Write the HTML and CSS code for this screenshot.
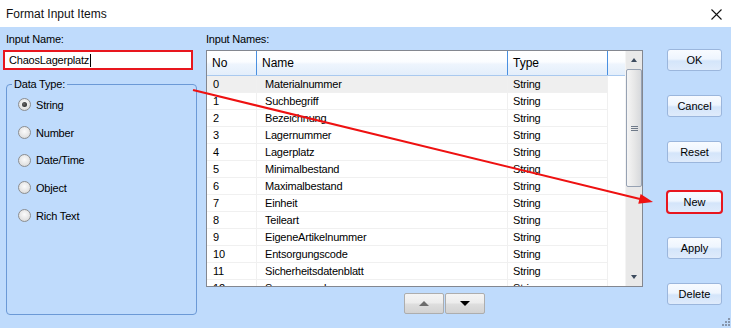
FILE: index.html
```html
<!DOCTYPE html>
<html>
<head>
    <title>Format Input Items</title>
    <link rel="stylesheet" href="styles.css">
</head>
<body>
    <div class="window">
        <div class="titlebar">
            <span class="title">Format Input Items</span>
            <svg class="close" width="11" height="11" viewBox="0 0 11 11">
                <path d="M0.5 0.5 L10.5 10.5 M10.5 0.5 L0.5 10.5" stroke="#111" stroke-width="1.1"/>
            </svg>
        </div>

        <div class="client">
            <div class="left-pane">
                <label class="field-label">Input Name:</label>
                <div class="name-field"><span>ChaosLagerplatz</span><span class="caret"></span></div>

                <fieldset class="group">
                    <legend>Data Type:</legend>
                    <div class="radio checked"><span class="radio-mark"></span>String</div>
                    <div class="radio"><span class="radio-mark"></span>Number</div>
                    <div class="radio"><span class="radio-mark"></span>Date/Time</div>
                    <div class="radio"><span class="radio-mark"></span>Object</div>
                    <div class="radio"><span class="radio-mark"></span>Rich Text</div>
                </fieldset>
            </div>

            <div class="center-pane">
                <label class="field-label">Input Names:</label>
                <div class="list">
                    <div class="list-view">
                        <div class="list-head">
                            <div class="hcell col-no">No</div>
                            <div class="hcell col-name">Name</div>
                            <div class="hcell col-type">Type</div>
                        </div>
                        <div class="row selected"><div class="cell col-no">0</div><div class="cell col-name">Materialnummer</div><div class="cell col-type">String</div></div>
                        <div class="row"><div class="cell col-no">1</div><div class="cell col-name">Suchbegriff</div><div class="cell col-type">String</div></div>
                        <div class="row"><div class="cell col-no">2</div><div class="cell col-name">Bezeichnung</div><div class="cell col-type">String</div></div>
                        <div class="row"><div class="cell col-no">3</div><div class="cell col-name">Lagernummer</div><div class="cell col-type">String</div></div>
                        <div class="row"><div class="cell col-no">4</div><div class="cell col-name">Lagerplatz</div><div class="cell col-type">String</div></div>
                        <div class="row"><div class="cell col-no">5</div><div class="cell col-name">Minimalbestand</div><div class="cell col-type">String</div></div>
                        <div class="row"><div class="cell col-no">6</div><div class="cell col-name">Maximalbestand</div><div class="cell col-type">String</div></div>
                        <div class="row"><div class="cell col-no">7</div><div class="cell col-name">Einheit</div><div class="cell col-type">String</div></div>
                        <div class="row"><div class="cell col-no">8</div><div class="cell col-name">Teileart</div><div class="cell col-type">String</div></div>
                        <div class="row"><div class="cell col-no">9</div><div class="cell col-name">EigeneArtikelnummer</div><div class="cell col-type">String</div></div>
                        <div class="row"><div class="cell col-no">10</div><div class="cell col-name">Entsorgungscode</div><div class="cell col-type">String</div></div>
                        <div class="row"><div class="cell col-no">11</div><div class="cell col-name">Sicherheitsdatenblatt</div><div class="cell col-type">String</div></div>
                        <div class="row"><div class="cell col-no">12</div><div class="cell col-name">Sperrvermerk</div><div class="cell col-type">String</div></div>
                    </div>
                    <div class="scrollbar">
                        <div class="sb-btn"><span class="tri-up"></span></div>
                        <div class="sb-thumb"><span class="grip-lines"></span></div>
                        <div class="sb-track"></div>
                        <div class="sb-btn"><span class="tri-down"></span></div>
                    </div>
                </div>
                <div class="move-bar">
                    <button class="move-btn"><span class="move-up"></span></button>
                    <button class="move-btn"><span class="move-down"></span></button>
                </div>
            </div>

            <div class="button-col">
                <button class="btn">OK</button>
                <button class="btn">Cancel</button>
                <button class="btn">Reset</button>
                <button class="btn btn-new">New</button>
                <button class="btn">Apply</button>
                <button class="btn">Delete</button>
            </div>
        </div>

        <!-- annotation arrow drawn over the dialog -->
        <svg class="annotation" width="731" height="328" viewBox="0 0 731 328">
            <line x1="193" y1="90" x2="640" y2="199" stroke="#ee1111" stroke-width="2"/>
            <polygon points="653,202 638.3,203.8 640.6,194" fill="#ee1111"/>
        </svg>

        <svg class="size-grip" width="12" height="12" viewBox="0 0 12 12">
            <rect x="9" y="2" width="2" height="2" fill="#8796ac"/>
            <rect x="6" y="5" width="2" height="2" fill="#8796ac"/>
            <rect x="9" y="5" width="2" height="2" fill="#8796ac"/>
            <rect x="3" y="8" width="2" height="2" fill="#8796ac"/>
            <rect x="6" y="8" width="2" height="2" fill="#8796ac"/>
            <rect x="9" y="8" width="2" height="2" fill="#8796ac"/>
        </svg>
    </div>
</body>
</html>
```

FILE: styles.css
```css
body {
    margin: 0;
    font-family: "Liberation Sans", Arial, sans-serif;
    font-size: 11px;
    letter-spacing: -0.2px;
    color: #000;
}

.window {
    position: relative;
    width: 731px;
    height: 328px;
    background-color: #bfdbfc;
    overflow: hidden;
}

.titlebar {
    height: 27px;
    background-color: #fff;
    display: flex;
    align-items: center;
    justify-content: space-between;
    padding: 0 9px 0 6px;
    box-sizing: border-box;
}

.title {
    font-size: 12px;
    letter-spacing: 0;
    color: #111;
}

.close {
    margin-top: 1px;
}

.client {
    display: flex;
    height: 301px;
    padding-left: 3px;
}

/* left side */

.left-pane {
    width: 194px;
    margin-right: 9px;
    padding-top: 6px;
}

.field-label {
    display: block;
    line-height: 13px;
    padding-left: 3px;
}

.center-pane .field-label {
    padding-left: 0;
}

.name-field {
    margin-top: 4px;
    width: 190px;
    height: 20px;
    box-sizing: border-box;
    border: 2px solid #e8161e;
    background-color: #fff;
    display: flex;
    align-items: center;
    padding-left: 4px;
}

.caret {
    width: 1px;
    height: 13px;
    background-color: #000;
    margin-left: 1px;
}

.group {
    margin: 8px 0 0 3px;
    padding: 0 0 0 5px;
    width: 191px;
    height: 237px;
    box-sizing: border-box;
    border: 1px solid #6b99d6;
    border-radius: 4px;
}

.group legend {
    padding: 0 2px;
    line-height: 13px;
}

.radio {
    display: flex;
    align-items: center;
    height: 27.7px;
}

.radio-mark {
    position: relative;
    width: 13px;
    height: 13px;
    box-sizing: border-box;
    margin: 0 5px 0 6px;
    border: 1px solid #8c8e90;
    border-radius: 50%;
    background: radial-gradient(circle at 50% 40%, #fbfbfb, #e4e4e4 60%, #cfcfcf);
}

.radio.checked .radio-mark::after {
    content: '';
    position: absolute;
    left: 3px;
    top: 3px;
    width: 5px;
    height: 5px;
    border-radius: 50%;
    background: radial-gradient(circle at 40% 40%, #6a6a6a, #1a1a1a);
}

/* list view */

.center-pane {
    width: 437px;
    padding-top: 6px;
}

.list {
    margin-top: 4px;
    width: 437px;
    height: 237px;
    box-sizing: border-box;
    border: 1px solid #838790;
    background-color: #fff;
    display: flex;
}

.list-view {
    flex: 1;
    overflow: hidden;
}

.list-head {
    height: 25px;
    display: flex;
    box-sizing: border-box;
    border-bottom: 1px solid #a9c9ef;
    background: linear-gradient(#ffffff, #fbfdff 45%, #eef5fd 55%, #e3eefb);
}

.hcell {
    height: 24px;
    line-height: 24px;
    font-size: 12px;
    letter-spacing: 0;
    padding-left: 5px;
    box-sizing: border-box;
    border-right: 1px solid #4a90e0;
}

.col-no {
    width: 50px;
}

.col-name {
    width: 251px;
}

.col-type {
    width: 100px;
}

.row {
    display: flex;
    width: 401px;
    height: 17px;
    box-sizing: border-box;
    border-bottom: 1px solid #f0f0f0;
}

.row.selected {
    background-color: #efefef;
}

.cell {
    line-height: 17px;
    padding-left: 6px;
    box-sizing: border-box;
    border-right: 1px solid #f0f0f0;
    white-space: nowrap;
    overflow: hidden;
}

.cell.col-name {
    padding-left: 8px;
}

.cell.col-type {
    padding-left: 5px;
}

.scrollbar {
    width: 17px;
    display: flex;
    flex-direction: column;
    background-color: #e9e9e9;
    border-left: 1px solid #f4f4f4;
    box-sizing: border-box;
}

.sb-btn {
    height: 18px;
    display: flex;
    align-items: center;
    justify-content: center;
}

.tri-up {
    border-left: 3.5px solid transparent;
    border-right: 3.5px solid transparent;
    border-bottom: 4px solid #3d4b5e;
}

.tri-down {
    border-left: 3.5px solid transparent;
    border-right: 3.5px solid transparent;
    border-top: 4px solid #3d4b5e;
}

.sb-thumb {
    height: 118px;
    box-sizing: border-box;
    border: 1px solid #97a2b3;
    border-radius: 2px;
    background: linear-gradient(to right, #f5f5f5, #e8e8e8 50%, #d7d9dc);
    display: flex;
    align-items: center;
    justify-content: center;
}

.grip-lines {
    width: 7px;
    height: 5px;
    background: repeating-linear-gradient(#6f7a89 0 1px, transparent 1px 2px);
}

.sb-track {
    flex: 1;
}

.move-bar {
    display: flex;
    gap: 1px;
    margin-top: 6px;
    padding-left: 198px;
}

.move-btn {
    width: 40px;
    height: 21px;
    padding: 0;
    display: flex;
    align-items: center;
    justify-content: center;
    border: 1px solid #adadad;
    border-radius: 2px;
    background: linear-gradient(#f4f4f4, #ececec 48%, #dedede 52%, #d2d2d2);
}

.move-up {
    border-left: 5px solid transparent;
    border-right: 5px solid transparent;
    border-bottom: 5px solid #6c6c6c;
}

.move-down {
    border-left: 5px solid transparent;
    border-right: 5px solid transparent;
    border-top: 5px solid #000;
}

/* buttons on the right */

.button-col {
    margin-left: 24px;
    padding-top: 22px;
    display: flex;
    flex-direction: column;
    gap: 24px;
}

.btn {
    width: 55px;
    height: 22px;
    padding: 0;
    box-sizing: border-box;
    font-family: "Liberation Sans", Arial, sans-serif;
    font-size: 11px;
    color: #000;
    border: 1px solid #9bb6dc;
    border-radius: 3px;
    background: linear-gradient(#f8fbff, #eef5fe 45%, #d4e5fa 55%, #dfebfb);
}

.btn-new {
    margin-top: 4px;
    outline: 2px solid #e8161e;
    outline-offset: -1px;
}

.annotation {
    position: absolute;
    left: 0;
    top: 0;
    pointer-events: none;
}

.size-grip {
    position: absolute;
    right: 0;
    bottom: 0;
}
```
